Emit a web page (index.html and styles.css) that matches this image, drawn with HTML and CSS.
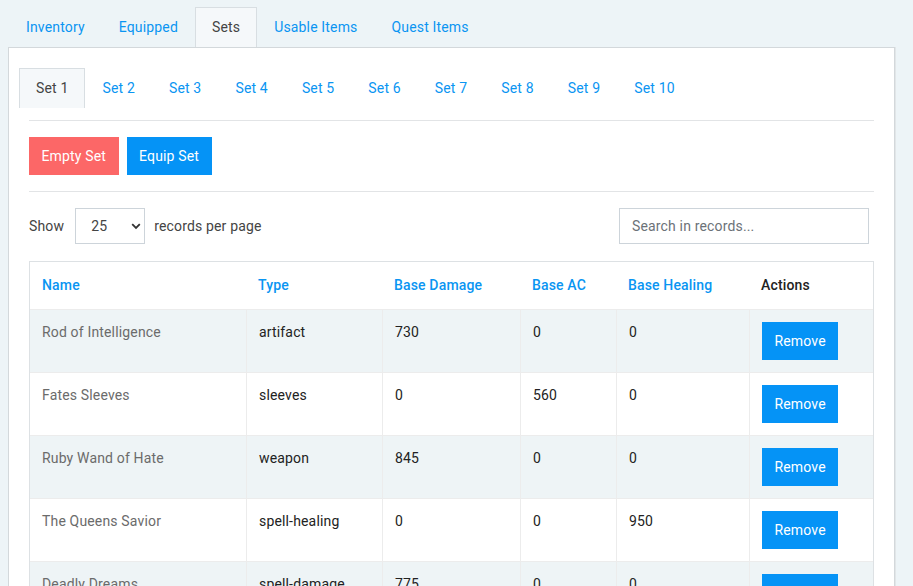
FILE: index.html
```html
<!DOCTYPE html>
<html lang="en">
<head>
<meta charset="utf-8">
<title>Sets</title>
<link rel="stylesheet" href="styles.css">
</head>
<body>
<div class="page">
  <ul class="tabs">
    <li class="tab"><a>Inventory</a></li>
    <li class="tab"><a>Equipped</a></li>
    <li class="tab active"><a>Sets</a></li>
    <li class="tab"><a>Usable Items</a></li>
    <li class="tab"><a>Quest Items</a></li>
  </ul>
  <div class="panel">
    <ul class="tabs set-tabs">
      <li class="tab active"><a>Set 1</a></li>
      <li class="tab"><a>Set 2</a></li>
      <li class="tab"><a>Set 3</a></li>
      <li class="tab"><a>Set 4</a></li>
      <li class="tab"><a>Set 5</a></li>
      <li class="tab"><a>Set 6</a></li>
      <li class="tab"><a>Set 7</a></li>
      <li class="tab"><a>Set 8</a></li>
      <li class="tab"><a>Set 9</a></li>
      <li class="tab"><a>Set 10</a></li>
    </ul>
    <hr class="rule rule-top">
    <div class="actions">
      <button class="btn btn-red">Empty Set</button>
      <button class="btn btn-blue">Equip Set</button>
    </div>
    <hr class="rule rule-mid">
    <div class="controls">
      <div class="per-page">
        <span class="label">Show</span>
        <div class="select-wrap">
          <select class="select">
            <option>25</option>
            <option>50</option>
            <option>100</option>
          </select>
          <svg class="chev" width="10" height="7" viewBox="0 0 10 7"><path d="M1.2 1.2 L5 5 L8.8 1.2" fill="none" stroke="#333" stroke-width="1.8"/></svg>
        </div>
        <span class="label">records per page</span>
      </div>
      <input class="search" type="text" placeholder="Search in records...">
    </div>
    <table class="grid">
      <thead>
        <tr>
          <th class="c-name sort">Name</th>
          <th class="c-type sort">Type</th>
          <th class="c-dmg sort">Base Damage</th>
          <th class="c-ac sort">Base AC</th>
          <th class="c-heal sort">Base Healing</th>
          <th class="c-act">Actions</th>
        </tr>
      </thead>
      <tbody>
        <tr><td class="name">Rod of Intelligence</td><td>artifact</td><td>730</td><td>0</td><td>0</td><td><button class="btn btn-blue">Remove</button></td></tr>
        <tr><td class="name">Fates Sleeves</td><td>sleeves</td><td>0</td><td>560</td><td>0</td><td><button class="btn btn-blue">Remove</button></td></tr>
        <tr><td class="name">Ruby Wand of Hate</td><td>weapon</td><td>845</td><td>0</td><td>0</td><td><button class="btn btn-blue">Remove</button></td></tr>
        <tr><td class="name">The Queens Savior</td><td>spell-healing</td><td>0</td><td>0</td><td>950</td><td><button class="btn btn-blue">Remove</button></td></tr>
        <tr><td class="name">Deadly Dreams</td><td>spell-damage</td><td>775</td><td>0</td><td>0</td><td><button class="btn btn-blue">Remove</button></td></tr>
      </tbody>
    </table>
  </div>
</div>
</body>
</html>
```
FILE: styles.css
```css
* { box-sizing: border-box; }
html, body { margin: 0; padding: 0; }
body {
  background: #edf4f7;
  font-family: Roboto, "Liberation Sans", Arial, sans-serif;
  font-size: 14px;
  letter-spacing: 0.16px;
  color: #222;
}
.page {
  padding: 7px 18px 0 8px;
}
.tabs {
  list-style: none;
  margin: 0;
  padding: 0 0 0 1px;
  display: flex;
}
.tab a {
  display: block;
  padding: 10px 16px;
  line-height: 18px;
  border: 1px solid transparent;
  border-bottom: 0;
  color: #0a95f2;
  cursor: pointer;
}
.tab.active a {
  background: #f5f8fa;
  border-color: #d8dee2;
  color: #444;
  padding-bottom: 11px;
}
.panel {
  background: #fff;
  border: 1px solid #d3d8db;
  box-shadow: 1px 0 0 #e2e6e8;
  padding: 20px 20px 40px;
  min-height: 560px;
}
.set-tabs {
  margin: 0 -10px;
  padding: 0;
}
.rule {
  border: 0;
  border-top: 1px solid #e2e4e6;
  margin: 0;
}
.rule-top { margin-top: 12px; }
.actions {
  display: flex;
  gap: 8px;
  margin: 16px 0;
}
.btn {
  font-family: inherit;
  font-size: 14px;
  letter-spacing: 0.16px;
  height: 38px;
  padding: 0 12.5px;
  border: 0;
  border-radius: 0;
  color: #fff;
  cursor: pointer;
}
.btn-red { background: #fc6767; }
.btn-blue { background: #0593f6; }
.controls {
  display: flex;
  justify-content: space-between;
  align-items: center;
  margin-top: 16px;
  padding-right: 5px;
}
.per-page {
  display: flex;
  align-items: center;
  color: #444;
}
.select-wrap {
  position: relative;
  margin: 0 9px 0 11px;
}
.select {
  appearance: none;
  -webkit-appearance: none;
  width: 70px;
  height: 36px;
  border: 1px solid #cdd4da;
  border-radius: 0;
  background: #fff;
  padding: 0 0 0 15px;
  font-family: inherit;
  font-size: 14px;
  letter-spacing: 0.16px;
  color: #444;
  display: block;
}
.chev {
  position: absolute;
  right: 4px;
  top: 15px;
  pointer-events: none;
}
.search {
  width: 250px;
  height: 36px;
  border: 1px solid #cdd4da;
  border-radius: 0;
  padding: 0 12px;
  font-family: inherit;
  font-size: 14px;
  letter-spacing: 0.16px;
  color: #444;
}
.search::placeholder { color: #6c7278; }
.grid {
  margin-top: 17px;
  width: 845px;
  table-layout: fixed;
  border-collapse: separate;
  border-spacing: 0;
  border: 1px solid #dde1e4;
}
.grid th {
  text-align: left;
  font-weight: 500;
  padding: 13px 12px;
  line-height: 21px;
  color: #222;
}
.grid th.sort { color: #0a95f2; }
.c-name { width: 216px; }
.c-type { width: 136px; }
.c-dmg { width: 138px; }
.c-ac { width: 96px; }
.c-heal { width: 133px; }
.c-act { width: 124px; }
.grid td {
  vertical-align: top;
  padding: 12px;
  line-height: 21px;
  border-top: 1px solid #ececec;
  border-left: 1px solid #ececec;
  color: #222;
}
.grid td:first-child { border-left: 0; }
.grid tbody tr:nth-child(odd) td { background: #eef4f6; }
.grid td.name { color: #6b6b6b; }
```
